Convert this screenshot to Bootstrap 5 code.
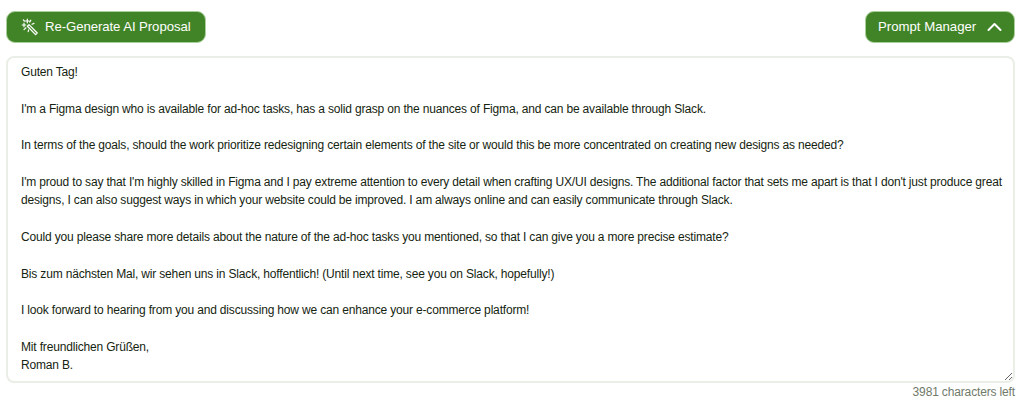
<!DOCTYPE html>
<html lang="en">
<head>
<meta charset="utf-8">
<title>Proposal</title>
<link href="https://cdn.jsdelivr.net/npm/bootstrap@5.3.0/dist/css/bootstrap.min.css" rel="stylesheet">
<style>
html,body{height:400px;overflow:hidden;background:#fff;}
body{font-family:"Liberation Sans",sans-serif;}
.page-wrap{padding:11px 9px 0 6px;}
.btn-leaf{--bs-btn-bg:#418427;--bs-btn-border-color:#a9cf9b;--bs-btn-color:#fff;--bs-btn-hover-bg:#418427;--bs-btn-hover-color:#fff;--bs-btn-hover-border-color:#a9cf9b;--bs-btn-border-radius:9px;--bs-btn-padding-y:0;--bs-btn-padding-x:12px;--bs-btn-font-size:13.2px;height:32px;white-space:nowrap;}
.gen-btn{width:200px;padding-left:14px;gap:6px;letter-spacing:-.08px;}
.pm-btn{width:150px;}
.wand{width:18px;height:18px;flex:none;}
.chev{width:15px;height:10px;flex:none;}
.proposal-box{height:327px;margin-top:13px;border:2px solid #e9eee7;border-radius:8px;padding:5px 7px 5px 13px;font-size:12px;letter-spacing:-.17px;line-height:18.33px;color:#152410;font-family:"Liberation Sans",sans-serif;}
.proposal-box:focus{border-color:#e9eee7;box-shadow:none;}
.char-count{font-size:12px;letter-spacing:-.15px;color:#6f7a69;line-height:16px;margin-top:1px;}
</style>
</head>
<body>
<div class="page-wrap">
  <div class="d-flex justify-content-between align-items-center">
    <button type="button" class="btn btn-leaf gen-btn d-flex align-items-center">
      <svg class="wand" viewBox="0 0 18 18" fill="none" stroke="#fff" stroke-linecap="round" aria-hidden="true">
        <path d="M8 6.6l8.2 8.4-1.6 1.6-8.2-8.4z" stroke-width="1.3" stroke-linejoin="round"/>
        <path d="M6.3 1.2v3.6M4.5 3h3.6M1.2 7h3.6M3 5.2v3.6M9.8 2.2l-1 1.8M13 5.4l-2 .8M2.4 2l1 1M3 11.6l2-1.8M7.6 11.8l-.4 1.8" stroke-width="1.2"/>
      </svg>
      <span>Re-Generate AI Proposal</span>
    </button>
    <button type="button" class="btn btn-leaf pm-btn d-flex align-items-center justify-content-between">
      <span>Prompt Manager</span>
      <svg class="chev" viewBox="0 0 15 10" fill="none" stroke="#fff" stroke-width="2" stroke-linecap="round" stroke-linejoin="round" aria-hidden="true"><path d="M1.5 8L7.5 2l6 6"/></svg>
    </button>
  </div>
  <textarea class="form-control proposal-box d-block" aria-label="Proposal">Guten Tag!

I'm a Figma design who is available for ad-hoc tasks, has a solid grasp on the nuances of Figma, and can be available through Slack.

In terms of the goals, should the work prioritize redesigning certain elements of the site or would this be more concentrated on creating new designs as needed?

I'm proud to say that I'm highly skilled in Figma and I pay extreme attention to every detail when crafting UX/UI designs. The additional factor that sets me apart is that I don't just produce great designs, I can also suggest ways in which your website could be improved. I am always online and can easily communicate through Slack.

Could you please share more details about the nature of the ad-hoc tasks you mentioned, so that I can give you a more precise estimate?

Bis zum nächsten Mal, wir sehen uns in Slack, hoffentlich! (Until next time, see you on Slack, hopefully!)

I look forward to hearing from you and discussing how we can enhance your e-commerce platform!

Mit freundlichen Grüßen,
Roman B.</textarea>
  <div class="char-count text-end">3981 characters left</div>
</div>
<script src="https://cdn.jsdelivr.net/npm/bootstrap@5.3.0/dist/js/bootstrap.bundle.min.js"></script>
</body>
</html>
